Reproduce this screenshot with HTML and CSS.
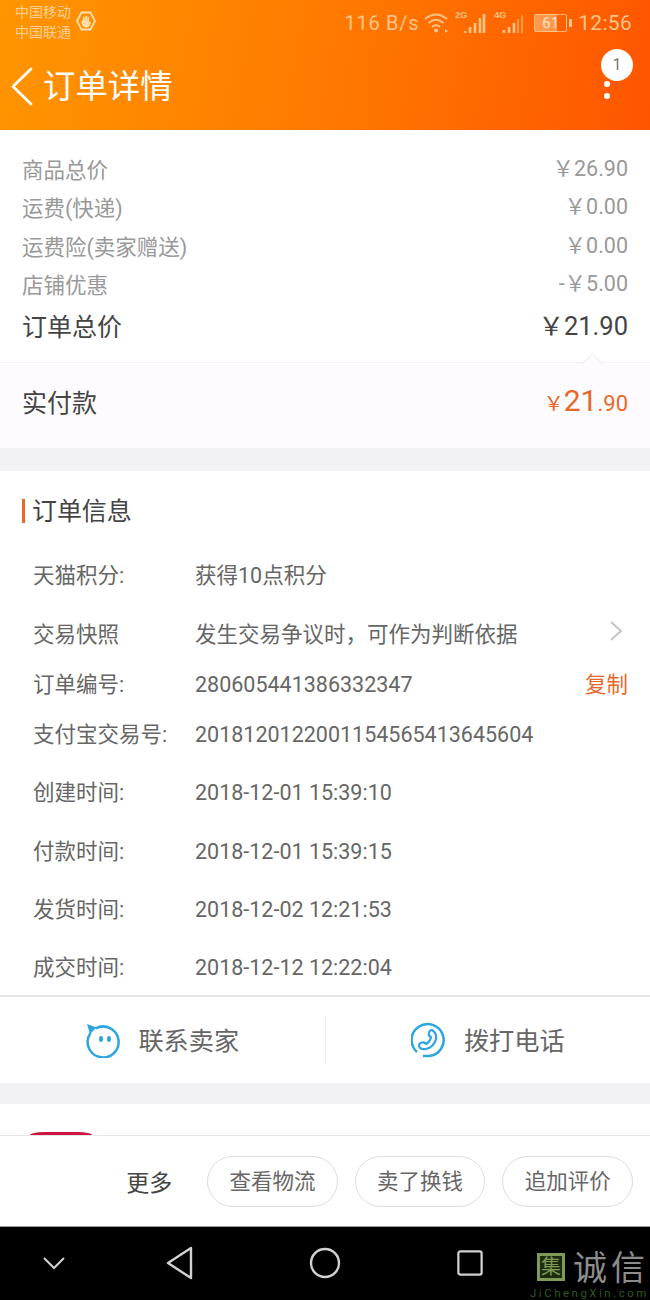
FILE: index.html
```html
<!DOCTYPE html>
<html lang="zh-CN">
    <head>
        <meta charset="utf-8">
        <link rel="stylesheet" href="styles.css">
    </head>
    <body>
    <div class="page">
        <header class="top">
            <div class="status">
                <div class="carrier"><span>中国移动</span><span>中国联通</span></div>
                <svg class="hand" width="20" height="20" viewBox="0 0 20 20"><path d="M1 10L5.500 1.500H14.500L19 10L14.500 18.500H5.500Z" fill="none" stroke="#ffe0b0" stroke-width="1.800"/><path d="M6.500 10V12.500Q7.500 15.500 10 15.500Q13 15.500 14 11.500M7.800 11V6.500M10 11V5.500M12.200 11V6.500" fill="none" stroke="#ffe0b0" stroke-width="1.800" stroke-linecap="round"/><path d="M7.500 10H12.500V15H8.500Z" fill="#ffe0b0"/></svg>
                <div class="status-right">
                    <span class="speed">116 B/s</span>
                    <svg width="26" height="22" viewBox="0 0 26 22"><path d="M1 7Q12 -2 23 7M4.500 11Q12 4.500 19.500 11M8 15Q12 11.500 16 15" fill="none" stroke="#ffc58a" stroke-width="2"/><circle cx="12" cy="18.500" r="2" fill="#ffc58a"/><path d="M21 17l3 2-3 2z" fill="#ffc58a"/></svg>
                    <span class="net"><i>2G</i><svg width="23" height="22" viewBox="0 0 23 22"><path d="M2 19v2M7 15v6M12 11v10M17 6v15M21 2v19" stroke="#ffc58a" stroke-width="2.600" fill="none"/></svg></span>
                    <span class="net"><i>4G</i><svg width="22" height="22" viewBox="0 0 22 22"><path d="M2 18v3M7 15v6M12 11v10" stroke="#ffc58a" stroke-width="2.600" fill="none"/><path d="M16 7v14M20 3v18" stroke="#ff9a4d" stroke-width="2" fill="none"/></svg></span>
                    <span class="battery">61</span>
                    <span class="clock">12:56</span>
                </div>
            </div>
            <div class="title-row">
                <svg class="back" width="24" height="40" viewBox="0 0 24 40"><path d="M21 2L3 19.500L21 37" fill="none" stroke="#fff" stroke-width="2.800" stroke-linecap="round" stroke-linejoin="round"/></svg>
                <h1>订单详情</h1>
                <div class="menu"><i></i><i></i><span class="badge">1</span></div>
            </div>
        </header>

        <section class="summary">
            <div class="line"><span>商品总价</span><span>￥26.90</span></div>
            <div class="line"><span>运费(快递)</span><span>￥0.00</span></div>
            <div class="line"><span>运费险(卖家赠送)</span><span>￥0.00</span></div>
            <div class="line"><span>店铺优惠</span><span>-￥5.00</span></div>
            <div class="line total"><span>订单总价</span><span>￥21.90</span></div>
        </section>
        <section class="paid">
            <span class="caret"></span>
            <span class="paid-label">实付款</span>
            <span class="paid-price"><small>￥</small><b>21</b><em>.90</em></span>
        </section>

        <section class="info">
            <h2>订单信息</h2>
            <div class="row first"><span class="key">天猫积分:</span><span>获得10点积分</span></div>
            <div class="row wide"><span class="key">交易快照</span><span>发生交易争议时，可作为判断依据</span>
                <svg class="more" width="14" height="22" viewBox="0 0 14 22"><path d="M2 2L12 11L2 20" fill="none" stroke="#c4c4c4" stroke-width="2"/></svg>
            </div>
            <div class="row"><span class="key">订单编号:</span><span class="num">280605441386332347</span><span class="copy">复制</span></div>
            <div class="row"><span class="key">支付宝交易号:</span><span class="num">2018120122001154565413645604</span></div>
            <div class="row tall"><span class="key">创建时间:</span><span class="num">2018-12-01 15:39:10</span></div>
            <div class="row wide"><span class="key">付款时间:</span><span class="num">2018-12-01 15:39:15</span></div>
            <div class="row tall"><span class="key">发货时间:</span><span class="num">2018-12-02 12:21:53</span></div>
            <div class="row tall"><span class="key">成交时间:</span><span class="num">2018-12-12 12:22:04</span></div>
        </section>

        <section class="contact">
            <div class="cell">
                <svg width="36" height="36" viewBox="0 0 36 36"><path d="M5.500 11A15.500 15.500 0 1 0 10.500 6.500" fill="none" stroke="#2ba6e0" stroke-width="2.500"/><path d="M2 2L11.500 5.500L5 12Z" fill="#2ba6e0"/><ellipse cx="16" cy="17" rx="2" ry="3" fill="#2ba6e0"/><ellipse cx="24" cy="17" rx="2" ry="3" fill="#2ba6e0"/></svg>
                <span>联系卖家</span>
            </div>
            <div class="cell">
                <svg width="36" height="36" viewBox="0 0 36 36"><path d="M6 30A16 16 0 1 1 18 34H12" fill="none" stroke="#2ba6e0" stroke-width="2.500"/><path d="M21 8Q26 11 25 17Q23 25 15 27Q9 28 8 24Q8 21 11 20.500Q14 20 15 22Q19 20 20 15Q17 14 18 11Q18.500 8 21 8Z" fill="none" stroke="#2ba6e0" stroke-width="2.200" stroke-linejoin="round"/></svg>
                <span>拨打电话</span>
            </div>
        </section>

        <section class="shop"><span class="shop-tag"></span></section>

        <footer class="actions">
            <span class="more-link">更多</span>
            <span class="pill">查看物流</span>
            <span class="pill">卖了换钱</span>
            <span class="pill">追加评价</span>
        </footer>

        <nav class="navbar">
            <svg width="24" height="14" viewBox="0 0 24 14"><path d="M2 2L12 12L22 2" fill="none" stroke="#d2d2d2" stroke-width="2"/></svg>
            <svg width="28" height="34" viewBox="0 0 28 34"><path d="M25 2V32L2 17Z" fill="none" stroke="#d2d2d2" stroke-width="2.400" stroke-linejoin="round"/></svg>
            <svg width="32" height="32" viewBox="0 0 32 32"><circle cx="16" cy="16" r="14" fill="none" stroke="#d2d2d2" stroke-width="2.400"/></svg>
            <svg width="28" height="28" viewBox="0 0 28 28"><rect x="1.500" y="1.500" width="25" height="25" rx="2" fill="none" stroke="#d2d2d2" stroke-width="2.400"/></svg>
            <div class="mark">
                <span class="mark-box">集</span>
                <span class="mark-name">诚信</span>
                <svg class="mark-leaf" width="26" height="32" viewBox="0 0 26 32"><path d="M14 1Q25 8 23.500 15Q17 22 11 15Q8 8 14 1Z" fill="#6ca030"/><path d="M14 17L1 30" stroke="#5a8a28" stroke-width="1.500"/></svg>
                <span class="mark-url">JiChengXin.com</span>
            </div>
        </nav>
    </div>
    </body>
</html>
```

FILE: styles.css
```css
*{margin:0;padding:0;box-sizing:border-box;}
html,body{height:100%;}
body{background:#fff;overflow:hidden;font-family:Roboto,"Noto Sans CJK SC",sans-serif;color:#666;}
.page{width:650px;height:1300px;display:flex;flex-direction:column;overflow:hidden;}

/* header */
.top{height:130px;flex:none;background:linear-gradient(100deg,#ff9500,#ff7a00 50%,#ff5500);color:#fff;}
.status{height:45px;display:flex;align-items:center;padding:0 18px 0 15px;}
.carrier{display:flex;flex-direction:column;font-size:14px;line-height:20px;color:#ffcf96;margin-top:-1px;}
.hand{margin:-3px 0 0 5px;}
.status-right{margin-left:auto;display:flex;align-items:center;color:#ffc58a;gap:5px;}
.speed{font-size:20px;letter-spacing:.7px;}
.net{display:flex;position:relative;padding-left:8px;}
.net + .net{margin-left:3px;}
.net i{position:absolute;left:0;top:-2px;font:bold 9px "Liberation Sans",sans-serif;}
.battery{width:33px;height:18px;border:1px solid rgba(255,205,150,.8);border-radius:2px;text-align:center;font-size:15px;line-height:16px;margin-left:5px;position:relative;color:#ffe3c4;background:linear-gradient(to right,rgba(255,220,170,.45) 70%,transparent 70%);}
.battery:after{content:"";position:absolute;right:-6px;top:4px;width:3px;height:8px;background:#ffc58a;}
.clock{font-size:21px;margin-left:6px;letter-spacing:.3px;}
.title-row{height:85px;display:flex;align-items:center;padding:0 0 1px 10px;position:relative;}
.title-row h1{font-size:32.400px;font-weight:400;margin-left:9px;line-height:40px;}
.menu{position:absolute;left:604px;top:36px;display:flex;flex-direction:column;gap:6px;}
.menu i{width:6px;height:6px;border-radius:50%;background:#fff;}
.badge{position:absolute;left:-3px;top:-32px;width:32px;height:32px;border-radius:50%;background:#fff;color:#777;font-size:16px;line-height:32px;text-align:center;}

/* price summary */
.summary{height:232px;flex:none;padding:19px 22px 0;color:#999;font-size:21.500px;}
.line{height:38.500px;display:flex;justify-content:space-between;align-items:center;}
.line span:last-child{padding-bottom:4px;}
.total{height:44px;font-size:25px;color:#444;}
.total span:last-child{font-size:25.500px;}
.paid{height:86px;flex:none;background:#fdfbfd;border-top:1px solid #f5f2f5;display:flex;justify-content:space-between;align-items:center;padding:0 22px 10px;position:relative;}
.caret{position:absolute;left:585px;top:-7px;width:15px;height:15px;background:#fdfbfd;border:1px solid #eee;border-width:1px 0 0 1px;transform:rotate(45deg);}
.paid-label{font-size:25px;color:#444;}
.paid-price{color:#e8682a;display:flex;align-items:baseline;}
.paid-price small{font-size:20px;}
.paid-price b{font-size:30px;font-weight:400;}
.paid-price em{font-size:22px;font-style:normal;}

/* order info */
.info{height:526px;flex:none;margin-top:23px;border-bottom:2px solid #e6e6e6;box-shadow:0 -23px 0 #f2f2f4;padding-left:33px;font-size:21.500px;color:#666;}
.info h2{height:82px;padding-top:25px;font-size:25px;line-height:32px;font-weight:400;color:#444;position:relative;letter-spacing:-.1px;margin-left:-1px;}
.info h2:before{content:"";position:absolute;left:-10px;top:28px;width:2.500px;height:24px;background:#e8682a;}
.row{height:40px;margin-top:10px;display:flex;align-items:center;position:relative;}
.row.first{margin-top:0;}
.row.tall{margin-top:18px;}
.row.wide{margin-top:19px;}
.key{width:162px;flex:none;color:#666;}
.num{padding-top:4px;}
.more{position:absolute;left:576px;top:8px;}
.copy{position:absolute;left:552px;color:#e8682a;}

/* contact */
.contact{height:86px;flex:none;display:flex;align-items:center;font-size:25.200px;color:#666;}
.cell{flex:1;height:48px;display:flex;align-items:center;justify-content:center;gap:17px;}
.cell + .cell{border-left:1px solid #eee;}
.cell span{padding-bottom:2px;}
.shop{height:52px;flex:none;background:#fff;border-top:21px solid #f2f2f4;display:flex;align-items:flex-end;padding-left:30px;}
.shop-tag{width:62px;height:3px;background:#cc1540;border-radius:14px 14px 0 0/3px 3px 0 0;}

/* bottom bar */
.actions{height:91px;flex:none;border-top:1px solid #e5e5e5;display:flex;align-items:center;justify-content:flex-end;padding:0 17px 0 0;gap:17px;}
.more-link{font-size:23px;color:#444;margin-right:18px;}
.pill{width:130.600px;height:51px;border:1px solid #ddd;border-radius:26px;text-align:center;line-height:49px;font-size:21.500px;color:#666;}

/* android nav */
.navbar{height:74px;flex:none;background:#000;border-top:1px solid #999;display:flex;align-items:center;position:relative;padding:0 0 2px 42px;}
.navbar svg:nth-child(2){margin-left:100px;}
.navbar svg:nth-child(3){margin-left:115px;}
.navbar svg:nth-child(4){margin-left:115px;transform:scale(.93);}
.mark{position:absolute;left:530px;top:25px;width:120px;height:48px;}
.mark-box{position:absolute;left:7px;top:1px;width:28px;height:28px;background:#1d2c10;border:3px solid #7e9a56;color:#7e9a56;font-size:20px;line-height:22px;text-align:center;}
.mark-name{position:absolute;left:43px;top:-1px;font-size:34px;line-height:34px;letter-spacing:4px;color:#8c8c8c;white-space:nowrap;}
.mark-leaf{position:absolute;left:89px;top:1px;}
.mark-url{position:absolute;left:0;top:35px;font-size:11.500px;line-height:13px;letter-spacing:2.500px;color:#2f5a1c;white-space:nowrap;}
```
